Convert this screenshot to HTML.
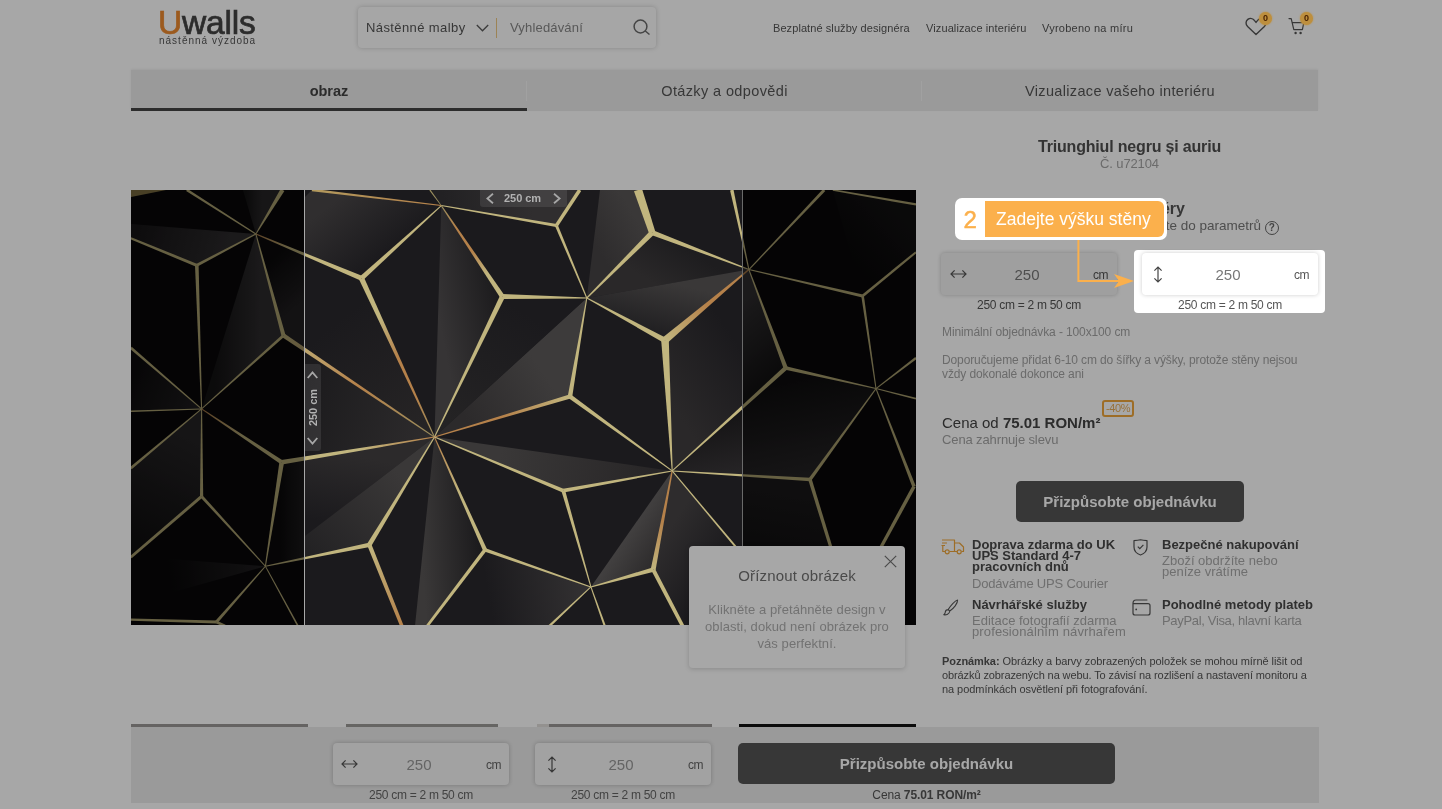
<!DOCTYPE html>
<html lang="cs">
<head>
<meta charset="utf-8">
<title>Uwalls - Triunghiul negru și auriu</title>
<style>
*{box-sizing:border-box;margin:0;padding:0}
html,body{width:1442px;height:809px;overflow:hidden;background:#fff}
body{font-family:"Liberation Sans",sans-serif;color:#444;position:relative}
.abs{position:absolute;white-space:nowrap;line-height:1}
#page{position:absolute;left:0;top:0;width:1442px;height:809px;overflow:hidden;background:#fff;will-change:transform}
#dim{position:absolute;left:0;top:0;width:1442px;height:809px;background:rgba(0,0,0,.345);z-index:50}
#over{position:absolute;left:0;top:0;width:1442px;height:809px;z-index:60;will-change:transform}
/* header */
.logo{left:158px;top:5.5px;font-size:33.5px;letter-spacing:-.2px;color:#444;height:34px;line-height:34px;-webkit-text-stroke:.7px}
.logo b{color:#ee8a2e;font-weight:400}
.tag{left:159px;top:36px;font-size:10px;letter-spacing:1px;color:#555}
.search{left:358px;top:7px;width:298px;height:41px;background:#fdfdfd;border-radius:4px;box-shadow:0 0 5px rgba(0,0,0,.2)}
.nav{font-size:11px;color:#555;top:23px}
.badge{width:13px;height:13px;border-radius:50%;background:#bd8f3e;color:#4a2200;font-size:9px;font-weight:700;text-align:center;line-height:13px;box-shadow:0 0 2px #bd8f3e}
/* tabs */
.tabs{left:131px;top:70px;width:1187px;height:41px;background:#ebebeb;box-shadow:0 -1px 2px rgba(0,0,0,.06)}
.tab{top:0;height:41px;line-height:43px;font-size:14.5px;text-align:center;color:#555}
/* panel */
.g{color:#a4a4a4;letter-spacing:-.12px}
.ctr{text-align:center}
.inp{width:176px;height:42px;border-radius:4px;background:#f3f3f3;box-shadow:0 0 4px rgba(0,0,0,.22)}
.inp .num{left:0;width:176px;text-align:center;top:14px;font-size:15px;color:#777;padding-right:4px}
.inp .cm{left:152px;top:16px;font-size:12px;color:#555;letter-spacing:-.6px}
.eq{font-size:12px;color:#555;text-align:center;width:176px;letter-spacing:-.28px}
.btn{background:#555;color:#fff;font-weight:700;font-size:15px;text-align:center;border-radius:5px}
.ft{font-size:13px;font-weight:700;color:#4a4a4a;line-height:11px}
.fs{font-size:13px;color:#aaa;line-height:11px}
.note{font-size:11px;line-height:14px;color:#555;letter-spacing:-.06px}
</style>
</head>
<body>
<div id="page">
  <!-- header -->
  <div class="abs logo"><b>U</b>walls</div>
  <div class="abs tag">nástěnná výzdoba</div>
  <div class="abs search">
    <span class="abs" style="left:8px;top:14px;font-size:13px;color:#555;letter-spacing:.4px">Nástěnné malby</span>
    <svg class="abs" style="left:118px;top:16.5px" width="13" height="8" viewBox="0 0 13 8"><path d="M.8 1 L6.5 6.8 L12.2 1" fill="none" stroke="#5a5a5a" stroke-width="1.3"/></svg>
    <div class="abs" style="left:138px;top:11px;width:1px;height:20px;background:#efc982"></div>
    <span class="abs" style="left:152px;top:14px;font-size:13px;color:#888;letter-spacing:.17px">Vyhledávání</span>
    <svg class="abs" style="left:274px;top:12.2px" width="19" height="17" viewBox="0 0 19 17"><circle cx="8.5" cy="7.5" r="6.4" fill="none" stroke="#6a6a6a" stroke-width="1.5"/><path d="M13.3 12 L17.5 15.5" stroke="#6a6a6a" stroke-width="1.5" fill="none"/></svg>
  </div>
  <span class="abs nav" style="left:773px;letter-spacing:.08px">Bezplatné služby designéra</span>
  <span class="abs nav" style="left:926px;letter-spacing:.11px">Vizualizace interiéru</span>
  <span class="abs nav" style="left:1042px;letter-spacing:.25px">Vyrobeno na míru</span>
  <svg class="abs" style="left:1245px;top:17px" width="22" height="19" viewBox="0 0 22 19"><path d="M11 17.5 L2.6 9.6 C0.4 7.4 0.6 4 2.8 2.4 C5 0.8 8 1.4 9.6 3.6 L11 5.4 L12.4 3.6 C14 1.4 17 0.8 19.2 2.4 C21.4 4 21.6 7.4 19.4 9.6 Z" fill="none" stroke="#555" stroke-width="1.4" stroke-linejoin="round"/></svg>
  <svg class="abs" style="left:1288px;top:17px" width="18" height="19" viewBox="0 0 18 19"><path d="M1 1.6 H3.2 L5.8 12.6 H14.4 L15.8 5.6 H4.2" fill="none" stroke="#555" stroke-width="1.2" stroke-linejoin="round" stroke-linecap="round"/><circle cx="7.6" cy="16" r="1.2" fill="#555"/><circle cx="12.6" cy="16" r="1.2" fill="#555"/></svg>

  <!-- tabs -->
  <div class="abs tabs">
    <div class="abs tab" style="left:0;width:396px;font-weight:700;color:#444;border-bottom:3px solid #444">obraz</div>
    <div class="abs tab" style="left:396px;width:395px;letter-spacing:.38px">Otázky a odpovědi</div>
    <div class="abs tab" style="left:791px;width:396px;letter-spacing:.35px">Vizualizace vašeho interiéru</div>
    <div class="abs" style="left:395px;top:11px;width:1px;height:20px;background:#f6f6f6"></div>
    <div class="abs" style="left:790px;top:11px;width:1px;height:20px;background:#f6f6f6"></div>
  </div>

  <!-- RIGHT PANEL -->
  <div class="abs ctr" style="left:941px;top:139px;width:377px;font-size:16px;font-weight:700;color:#505050;letter-spacing:-.18px">Triunghiul negru și auriu</div>
  <div class="abs ctr g" style="left:941px;top:157px;width:377px;font-size:13px">Č. u72104</div>
  <div class="abs" style="right:257px;top:201px;font-size:16px;font-weight:700;color:#555">Zadejte rozměry</div>
  <div class="abs" style="right:181px;top:218.5px;font-size:13.5px;color:#777">Nevíte, jak měřit? Přejděte do parametrů</div>
  <div class="abs ctr" style="left:1264.5px;top:220.5px;width:14.5px;height:14.5px;border:1.7px solid #666;border-radius:50%;font-size:10px;font-weight:700;line-height:11.2px;color:#666">?</div>

  <div class="abs inp" style="left:941px;top:253px">
    <svg class="abs" style="left:9px;top:16px" width="17" height="10" viewBox="0 0 17 10"><path d="M1 5 H16 M4.6 1.4 L1 5 L4.6 8.6 M12.4 1.4 L16 5 L12.4 8.6" fill="none" stroke="#555" stroke-width="1.2"/></svg>
    <span class="abs num">250</span><span class="abs cm">cm</span>
  </div>
  <div class="abs eq" style="left:941px;top:299px">250 cm = 2 m 50 cm</div>
  <div class="abs inp" style="left:1142px;top:253px">
    <svg class="abs" style="left:11px;top:13px" width="10" height="17" viewBox="0 0 10 17"><path d="M5 1 V16 M1.4 4.6 L5 1 L8.6 4.6 M1.4 12.4 L5 16 L8.6 12.4" fill="none" stroke="#555" stroke-width="1.2"/></svg>
    <span class="abs num">250</span><span class="abs cm">cm</span>
  </div>
  <div class="abs eq" style="left:1142px;top:299px">250 cm = 2 m 50 cm</div>

  <div class="abs g" style="left:942px;top:326px;font-size:12px">Minimální objednávka - 100x100 cm</div>
  <div class="abs g" style="left:942px;top:354px;font-size:12px;line-height:13.5px;white-space:normal;width:372px">Doporučujeme přidat 6-10 cm do šířky a výšky, protože stěny nejsou<br>vždy dokonalé dokonce ani</div>

  <div class="abs" style="left:942px;top:415px;font-size:15px;color:#444">Cena od <b>75.01 RON/m²</b></div>
  <div class="abs ctr" style="left:1102px;top:400px;width:32px;height:17px;border:2px solid #f0a73c;border-radius:3px;color:#e9ae5a;font-size:11px;line-height:13px;letter-spacing:-.4px">-40%</div>
  <div class="abs g" style="left:942px;top:432.5px;font-size:13px">Cena zahrnuje slevu</div>

  <div class="abs btn" style="left:1016px;top:481px;width:228px;height:41px;line-height:41px">Přizpůsobte objednávku</div>

  <!-- features -->
  <svg class="abs" style="left:941px;top:539px" width="24" height="16" viewBox="0 0 24 16"><g fill="none" stroke="#f0a73c" stroke-width="1.2" stroke-linejoin="round"><path d="M1 1 H13.5 V12.5 H8.5 M4 12.5 H1.8 V7"/><path d="M13.5 4 H18.5 L22.5 8 V12.5 H20.5 M16 12.5 H13.5"/><circle cx="6.2" cy="12.8" r="2"/><circle cx="18.2" cy="12.8" r="2"/><path d="M1 4 H6 M0.5 6.5 H4"/></g></svg>
  <div class="abs ft" style="left:972px;top:539.4px">Doprava zdarma do UK<br>UPS Standard 4-7<br>pracovních dnů</div>
  <div class="abs fs" style="left:972px;top:577.5px"><span style="letter-spacing:-.18px">Dodáváme UPS Courier</span></div>
  <svg class="abs" style="left:1133px;top:539px" width="15" height="17" viewBox="0 0 15 17"><path d="M1 1.6 C3.5 1.6 5.6 1.4 7.5 0.8 C9.4 1.4 11.5 1.6 14 1.6 V8 C14 12 11.5 14.6 7.5 16 C3.5 14.6 1 12 1 8 Z" fill="none" stroke="#555" stroke-width="1.2" stroke-linejoin="round"/><path d="M4.8 7.6 L6.8 9.6 L10.4 5.8" fill="none" stroke="#555" stroke-width="1.2"/></svg>
  <div class="abs ft" style="left:1162px;top:539.4px">Bezpečné nakupování</div>
  <div class="abs fs" style="left:1162px;top:554.5px">Zboží obdržíte nebo<br>peníze vrátíme</div>
  <svg class="abs" style="left:943px;top:599px" width="16" height="17" viewBox="0 0 16 17"><path d="M14.6 1 C12 1.6 7.4 6.6 5.2 10.6 L6.8 12 C10.6 9.4 14.8 4.4 14.6 1 Z M5.2 10.6 C3.2 10.6 2.4 12 2.2 13.4 C2 14.6 1.4 15.4 0.8 15.8 C3.2 16.2 6.4 15.2 6.8 12" fill="none" stroke="#555" stroke-width="1.1" stroke-linejoin="round"/></svg>
  <div class="abs ft" style="left:972px;top:599.3px">Návrhářské služby</div>
  <div class="abs fs" style="left:972px;top:614.5px">Editace fotografií zdarma<br><span style="letter-spacing:.12px">profesionálním návrhařem</span></div>
  <svg class="abs" style="left:1132px;top:599px" width="19" height="17" viewBox="0 0 19 17"><path d="M1 4.6 V14 Q1 16 3 16 H16 Q18 16 18 14 V6.6 Q18 4.6 16 4.6 H1 Q1 1 4 1 H15.4" fill="none" stroke="#555" stroke-width="1.2" stroke-linejoin="round"/><circle cx="4.2" cy="10.4" r=".9" fill="#555"/></svg>
  <div class="abs ft" style="left:1162px;top:599.3px">Pohodlné metody plateb</div>
  <div class="abs fs" style="left:1162px;top:614.5px"><span style="letter-spacing:-.33px">PayPal, Visa, hlavní karta</span></div>

  <div class="abs note" style="left:942px;top:654px"><b>Poznámka:</b> Obrázky a barvy zobrazených položek se mohou mírně lišit od<br><span style="letter-spacing:-.1px">obrázků zobrazených na webu. To závisí na rozlišení a nastavení monitoru a</span><br>na podmínkách osvětlení při fotografování.</div>

  <!-- thumbs -->
  <div class="abs" style="left:131px;top:724px;width:177px;height:40px;background:#9a9896"></div>
  <div class="abs" style="left:346px;top:724px;width:152px;height:40px;background:#9c9a98"></div>
  <div class="abs" style="left:537px;top:724px;width:12px;height:40px;background:#e0deda"></div>
  <div class="abs" style="left:549px;top:724px;width:163px;height:40px;background:#9a9896"></div>
  <div class="abs" style="left:739px;top:724px;width:177px;height:40px;background:#121112"></div>

  <!-- BOTTOM BAR -->
  <div class="abs" style="left:131px;top:727px;width:1188px;height:76px;background:#ebebeb"></div>
  <div class="abs inp" style="left:333px;top:743px;background:#f7f7f7">
    <svg class="abs" style="left:8px;top:16px" width="17" height="10" viewBox="0 0 17 10"><path d="M1 5 H16 M4.6 1.4 L1 5 L4.6 8.6 M12.4 1.4 L16 5 L12.4 8.6" fill="none" stroke="#555" stroke-width="1.2"/></svg>
    <span class="abs num" style="color:#999">250</span><span class="abs cm" style="left:153px;color:#666">cm</span>
  </div>
  <div class="abs eq" style="left:333px;top:789px;color:#666">250 cm = 2 m 50 cm</div>
  <div class="abs inp" style="left:535px;top:743px;background:#f7f7f7">
    <svg class="abs" style="left:12px;top:13px" width="10" height="17" viewBox="0 0 10 17"><path d="M5 1 V16 M1.4 4.6 L5 1 L8.6 4.6 M1.4 12.4 L5 16 L8.6 12.4" fill="none" stroke="#555" stroke-width="1.2"/></svg>
    <span class="abs num" style="color:#999">250</span><span class="abs cm" style="left:153px;color:#666">cm</span>
  </div>
  <div class="abs eq" style="left:535px;top:789px;color:#666">250 cm = 2 m 50 cm</div>
  <div class="abs btn" style="left:738px;top:743px;width:377px;height:41px;line-height:41px">Přizpůsobte objednávku</div>
  <div class="abs eq" style="left:738px;top:789px;width:377px;letter-spacing:-.1px">Cena <b>75.01 RON/m²</b></div>
</div>
<div id="dim"></div>
<div id="over">
  <div class="abs badge" style="left:1259px;top:12px">0</div>
  <div class="abs badge" style="left:1300px;top:12px">0</div>
  <!-- IMAGE -->
  <div class="abs" style="left:131px;top:190px;width:785px;height:435px;background:#0b0a0b;overflow:hidden">
<svg class="abs" style="left:0;top:0;filter:blur(.45px)" width="785" height="435" viewBox="0 0 785 435">
<defs><linearGradient id="l0" gradientUnits="userSpaceOnUse" x1="125" y1="44" x2="230" y2="88"><stop offset="0.00" stop-color="#b5814a"/><stop offset="0.33" stop-color="#c1b57e"/><stop offset="0.67" stop-color="#c1b57e"/><stop offset="1.00" stop-color="#c1b57e"/></linearGradient><linearGradient id="l1" gradientUnits="userSpaceOnUse" x1="152" y1="146" x2="304" y2="247"><stop offset="0.00" stop-color="#c1b57e"/><stop offset="0.50" stop-color="#b5814a"/><stop offset="1.00" stop-color="#9a8e5e"/></linearGradient><linearGradient id="l2" gradientUnits="userSpaceOnUse" x1="230" y1="88" x2="304" y2="247"><stop offset="0.00" stop-color="#c1b57e"/><stop offset="0.25" stop-color="#c1b57e"/><stop offset="0.50" stop-color="#b5814a"/><stop offset="0.75" stop-color="#b5814a"/><stop offset="1.00" stop-color="#9a8e5e"/></linearGradient><linearGradient id="l3" gradientUnits="userSpaceOnUse" x1="310" y1="16" x2="181" y2="0"><stop offset="0.00" stop-color="#b5814a"/><stop offset="1.00" stop-color="#b39a5e"/></linearGradient><linearGradient id="l4" gradientUnits="userSpaceOnUse" x1="310" y1="16" x2="371" y2="107"><stop offset="0.00" stop-color="#9a8e5e"/><stop offset="0.25" stop-color="#b5814a"/><stop offset="0.50" stop-color="#b5814a"/><stop offset="0.75" stop-color="#c1b57e"/><stop offset="1.00" stop-color="#c1b57e"/></linearGradient><linearGradient id="l5" gradientUnits="userSpaceOnUse" x1="534" y1="150" x2="618" y2="80"><stop offset="0.00" stop-color="#c1b57e"/><stop offset="0.50" stop-color="#b5814a"/><stop offset="1.00" stop-color="#b5814a"/></linearGradient><linearGradient id="l6" gradientUnits="userSpaceOnUse" x1="439" y1="206" x2="304" y2="247"><stop offset="0.00" stop-color="#c1b57e"/><stop offset="0.50" stop-color="#b5814a"/><stop offset="1.00" stop-color="#b5814a"/></linearGradient><linearGradient id="l7" gradientUnits="userSpaceOnUse" x1="71" y1="219" x2="151" y2="272"><stop offset="0.00" stop-color="#b5814a"/><stop offset="0.50" stop-color="#c1b57e"/><stop offset="1.00" stop-color="#c1b57e"/></linearGradient><linearGradient id="l8" gradientUnits="userSpaceOnUse" x1="151" y1="272" x2="304" y2="247"><stop offset="0.00" stop-color="#c1b57e"/><stop offset="0.50" stop-color="#c1b57e"/><stop offset="1.00" stop-color="#b5814a"/></linearGradient><linearGradient id="l9" gradientUnits="userSpaceOnUse" x1="304" y1="247" x2="354" y2="360"><stop offset="0.00" stop-color="#b5814a"/><stop offset="0.50" stop-color="#c1b57e"/><stop offset="1.00" stop-color="#c1b57e"/></linearGradient><linearGradient id="l10" gradientUnits="userSpaceOnUse" x1="238" y1="355" x2="271" y2="436"><stop offset="0.00" stop-color="#c1b57e"/><stop offset="1.00" stop-color="#b5814a"/></linearGradient><linearGradient id="l11" gradientUnits="userSpaceOnUse" x1="541" y1="281" x2="522" y2="380"><stop offset="0.00" stop-color="#b5814a"/><stop offset="0.50" stop-color="#b5814a"/><stop offset="1.00" stop-color="#c1b57e"/></linearGradient></defs>
<defs><linearGradient id="g0" gradientUnits="userSpaceOnUse" x1="199" y1="15" x2="244" y2="72"><stop offset="0" stop-color="#302e2f"/><stop offset="1" stop-color="#1b1a1d"/></linearGradient><linearGradient id="g1" gradientUnits="userSpaceOnUse" x1="314" y1="20" x2="399" y2="5"><stop offset="0" stop-color="#222123"/><stop offset="1" stop-color="#302e2f"/></linearGradient><linearGradient id="g2" gradientUnits="userSpaceOnUse" x1="310" y1="140" x2="372" y2="128"><stop offset="0" stop-color="#363435"/><stop offset="1" stop-color="#1c1b1d"/></linearGradient><linearGradient id="g3" gradientUnits="userSpaceOnUse" x1="467" y1="60" x2="509" y2="35"><stop offset="0" stop-color="#2e2c2d"/><stop offset="1" stop-color="#3a3838"/></linearGradient><linearGradient id="g4" gradientUnits="userSpaceOnUse" x1="509" y1="85" x2="534" y2="45"><stop offset="0" stop-color="#2a2829"/><stop offset="1" stop-color="#1e1d1f"/></linearGradient><linearGradient id="g5" gradientUnits="userSpaceOnUse" x1="549" y1="95" x2="537" y2="145"><stop offset="0" stop-color="#3a3838"/><stop offset="1" stop-color="#212022"/></linearGradient><linearGradient id="g6" gradientUnits="userSpaceOnUse" x1="414" y1="185" x2="339" y2="235"><stop offset="0" stop-color="#3d3b3b"/><stop offset="1" stop-color="#2c2a2b"/></linearGradient><linearGradient id="g7" gradientUnits="userSpaceOnUse" x1="173" y1="210" x2="304" y2="247"><stop offset="0" stop-color="#1c1b1d"/><stop offset="1" stop-color="#2e2c2d"/></linearGradient><linearGradient id="g8" gradientUnits="userSpaceOnUse" x1="291" y1="370" x2="349" y2="366"><stop offset="0" stop-color="#3a3838"/><stop offset="1" stop-color="#1c1b1d"/></linearGradient><linearGradient id="g9" gradientUnits="userSpaceOnUse" x1="369" y1="265" x2="519" y2="295"><stop offset="0" stop-color="#3a3838"/><stop offset="1" stop-color="#282627"/></linearGradient><linearGradient id="g10" gradientUnits="userSpaceOnUse" x1="497" y1="343" x2="537" y2="370"><stop offset="0" stop-color="#424040"/><stop offset="1" stop-color="#282627"/></linearGradient><linearGradient id="g11" gradientUnits="userSpaceOnUse" x1="531" y1="350" x2="584" y2="385"><stop offset="0" stop-color="#2e2c2d"/><stop offset="1" stop-color="#1b1a1d"/></linearGradient><linearGradient id="g12" gradientUnits="userSpaceOnUse" x1="537" y1="210" x2="611" y2="160"><stop offset="0" stop-color="#2a2829"/><stop offset="1" stop-color="#1b1a1d"/></linearGradient><linearGradient id="g13" gradientUnits="userSpaceOnUse" x1="209" y1="130" x2="294" y2="235"><stop offset="0" stop-color="#1b1a1d"/><stop offset="1" stop-color="#262425"/></linearGradient><linearGradient id="g14" gradientUnits="userSpaceOnUse" x1="389" y1="120" x2="319" y2="230"><stop offset="0" stop-color="#1b1a1d"/><stop offset="1" stop-color="#242324"/></linearGradient><linearGradient id="g15" gradientUnits="userSpaceOnUse" x1="199" y1="260" x2="184" y2="330"><stop offset="0" stop-color="#2c2a2b"/><stop offset="1" stop-color="#1b1a1d"/></linearGradient><linearGradient id="g16" gradientUnits="userSpaceOnUse" x1="460" y1="397" x2="359" y2="415"><stop offset="0" stop-color="#343233"/><stop offset="1" stop-color="#1b1a1d"/></linearGradient><linearGradient id="g17" gradientUnits="userSpaceOnUse" x1="264" y1="280" x2="169" y2="375"><stop offset="0" stop-color="#3a3838"/><stop offset="1" stop-color="#201f21"/></linearGradient><linearGradient id="g18" gradientUnits="userSpaceOnUse" x1="99" y1="60" x2="9" y2="35"><stop offset="0" stop-color="#343234"/><stop offset="1" stop-color="#1a181a"/></linearGradient><linearGradient id="g19" gradientUnits="userSpaceOnUse" x1="131" y1="140" x2="84" y2="140"><stop offset="0" stop-color="#343234"/><stop offset="1" stop-color="#161516"/></linearGradient><linearGradient id="g20" gradientUnits="userSpaceOnUse" x1="131" y1="10" x2="115" y2="10"><stop offset="0" stop-color="#2c2a2c"/><stop offset="1" stop-color="#161516"/></linearGradient><linearGradient id="g21" gradientUnits="userSpaceOnUse" x1="139" y1="70" x2="173" y2="110"><stop offset="0" stop-color="#0c0b0c"/><stop offset="1" stop-color="#242224"/></linearGradient><linearGradient id="g22" gradientUnits="userSpaceOnUse" x1="59" y1="250" x2="9" y2="350"><stop offset="0" stop-color="#2a282a"/><stop offset="1" stop-color="#121112"/></linearGradient><linearGradient id="g23" gradientUnits="userSpaceOnUse" x1="71" y1="219" x2="0" y2="190"><stop offset="0" stop-color="#242224"/><stop offset="1" stop-color="#0e0d0e"/></linearGradient><linearGradient id="g24" gradientUnits="userSpaceOnUse" x1="134" y1="376" x2="39" y2="390"><stop offset="0" stop-color="#242224"/><stop offset="1" stop-color="#0a090a"/></linearGradient><linearGradient id="g25" gradientUnits="userSpaceOnUse" x1="149" y1="310" x2="173" y2="310"><stop offset="0" stop-color="#0c0b0c"/><stop offset="1" stop-color="#1e1c1e"/></linearGradient><linearGradient id="g26" gradientUnits="userSpaceOnUse" x1="0" y1="0" x2="35" y2="0"><stop offset="0" stop-color="#8a7a48"/><stop offset="1" stop-color="#8a7a48"/></linearGradient><linearGradient id="g27" gradientUnits="userSpaceOnUse" x1="611" y1="110" x2="659" y2="170"><stop offset="0" stop-color="#343234"/><stop offset="1" stop-color="#161516"/></linearGradient><linearGradient id="g28" gradientUnits="userSpaceOnUse" x1="669" y1="190" x2="689" y2="280"><stop offset="0" stop-color="#100f10"/><stop offset="1" stop-color="#2a282a"/></linearGradient><linearGradient id="g29" gradientUnits="userSpaceOnUse" x1="719" y1="70" x2="769" y2="25"><stop offset="0" stop-color="#0a090a"/><stop offset="1" stop-color="#141314"/></linearGradient><linearGradient id="g30" gradientUnits="userSpaceOnUse" x1="659" y1="300" x2="639" y2="410"><stop offset="0" stop-color="#1e1c1e"/><stop offset="1" stop-color="#0c0b0c"/></linearGradient></defs>
<rect width="785" height="435" fill="#1b1a1d"/>
<g><polygon points="173.0,8.0 181.0,0.0 310.3,15.6 230.5,88.3 173.0,64.0" fill="url(#g0)"/><polygon points="310.3,15.6 298.9,0.0 448.7,0.0 425.4,35.5" fill="url(#g1)"/><polygon points="310.3,15.6 303.5,247.1 371.4,106.6" fill="url(#g2)"/><polygon points="469.0,0.0 507.0,0.0 521.2,42.6 455.8,108.0" fill="url(#g3)"/><polygon points="455.8,108.0 521.2,42.6 617.9,79.6" fill="url(#g4)"/><polygon points="455.8,108.0 617.9,79.6 534.0,150.3" fill="url(#g5)"/><polygon points="455.8,108.0 303.5,247.1 439.0,206.5" fill="url(#g6)"/><polygon points="152.5,145.5 303.5,247.1 150.7,272.3 173.0,265.0 173.0,160.0" fill="url(#g7)"/><polygon points="303.5,247.1 354.0,359.9 296.2,436.0 284.0,436.0" fill="url(#g8)"/><polygon points="303.5,247.1 541.2,280.9 432.3,300.7" fill="url(#g9)"/><polygon points="541.2,280.9 459.9,396.9 522.2,379.6" fill="url(#g10)"/><polygon points="541.2,280.9 522.2,379.6 551.6,436.0 611.0,436.0 611.0,364.0" fill="url(#g11)"/><polygon points="617.9,79.6 534.0,150.3 541.2,280.9 611.0,218.0 611.0,77.0" fill="url(#g12)"/><polygon points="230.5,88.3 303.5,247.1 152.5,145.5" fill="url(#g13)"/><polygon points="371.4,106.6 455.8,108.0 303.5,247.1" fill="url(#g14)"/><polygon points="150.7,272.3 303.5,247.1 134.4,376.2 173.0,367.0 173.0,269.0" fill="url(#g15)"/><polygon points="459.9,396.9 354.0,359.9 296.2,436.0 418.4,436.0" fill="url(#g16)"/><polygon points="303.5,247.1 238.3,354.8 134.4,376.2" fill="url(#g17)"/></g>
<rect x="0" y="0" width="173" height="435" fill="#000" opacity=".62"/><rect x="612" y="0" width="173" height="435" fill="#000" opacity=".62"/>
<g><polygon points="124.9,44.0 65.8,75.3 -0.2,48.3 0.0,34.0" fill="url(#g18)"/><polygon points="124.9,44.0 70.6,218.9 152.5,145.5" fill="url(#g19)"/><polygon points="124.9,44.0 151.5,0.0 112.0,0.0" fill="url(#g20)"/><polygon points="124.9,44.0 152.5,145.5 173.0,159.0 173.0,64.0" fill="url(#g21)"/><polygon points="70.6,218.9 -0.2,278.2 -0.2,367.3 70.6,306.4" fill="url(#g22)"/><polygon points="70.6,218.9 -0.2,157.8 -0.2,221.3" fill="url(#g23)"/><polygon points="134.4,376.2 0.0,366.0 0.0,414.0" fill="url(#g24)"/><polygon points="150.7,272.3 134.4,376.2 173.0,367.0 173.0,269.0" fill="url(#g25)"/><polygon points="0.0,0.0 35.0,0.0 0.0,7.0" fill="url(#g26)"/><polygon points="611.0,77.0 617.9,79.6 654.7,178.0 611.0,218.0" fill="url(#g27)"/><polygon points="654.7,178.0 745.0,198.6 679.0,289.5 541.2,280.9" fill="url(#g28)"/><polygon points="701.8,0.0 785.0,14.4 785.0,62.2 731.6,106.0" fill="url(#g29)"/><polygon points="679.0,289.5 611.0,285.0 611.0,436.0 724.0,436.0" fill="url(#g30)"/></g>
<g>
<polygon points="125.2,43.5 56.5,-1.1 55.1,1.1 124.6,44.5" fill="#c1b57e"/>
<polygon points="125.3,44.3 153.4,1.1 149.6,-1.1 124.5,43.7" fill="#c1b57e"/>
<polygon points="124.6,43.5 65.1,74.0 66.5,76.6 125.2,44.5" fill="#c1b57e"/>
<polygon points="124.7,44.5 229.5,90.6 231.5,86.0 125.1,43.5" fill="url(#l0)"/>
<polygon points="124.4,44.1 150.5,146.0 154.5,145.0 125.4,43.9" fill="#c1b57e"/>
<polygon points="66.4,73.9 0.2,47.3 -0.6,49.3 65.2,76.7" fill="#c1b57e"/>
<polygon points="64.0,75.4 70.1,218.9 71.1,218.9 67.6,75.2" fill="#c1b57e"/>
<polygon points="151.5,144.4 70.3,218.5 70.9,219.3 153.5,146.6" fill="#c1b57e"/>
<polygon points="151.3,147.3 303.2,247.5 303.8,246.7 153.7,143.7" fill="url(#l1)"/>
<polygon points="232.2,90.1 310.6,16.0 310.0,15.2 228.8,86.5" fill="#c1b57e"/>
<polygon points="228.1,89.4 303.0,247.3 304.0,246.9 232.9,87.2" fill="url(#l2)"/>
<polygon points="310.4,15.1 181.2,-1.3 180.8,1.3 310.2,16.1" fill="url(#l3)"/>
<polygon points="310.6,15.4 299.4,-0.4 298.4,0.4 310.0,15.8" fill="#9a8e5e"/>
<polygon points="310.2,16.1 425.1,37.0 425.7,34.0 310.4,15.1" fill="#c1b57e"/>
<polygon points="309.9,15.9 369.4,108.0 373.4,105.2 310.7,15.3" fill="url(#l4)"/>
<polygon points="371.4,109.1 455.8,108.5 455.8,107.5 371.4,104.1" fill="#c1b57e"/>
<polygon points="369.1,105.5 303.0,246.9 304.0,247.3 373.7,107.7" fill="#c1b57e"/>
<polygon points="426.8,36.4 450.2,1.0 447.2,-1.0 424.0,34.6" fill="#c1b57e"/>
<polygon points="424.0,36.1 455.3,108.2 456.3,107.8 426.8,34.9" fill="#c1b57e"/>
<polygon points="456.2,108.4 523.1,44.5 519.3,40.7 455.4,107.6" fill="#c1b57e"/>
<polygon points="455.6,108.4 532.7,152.7 535.3,147.9 456.0,107.6" fill="#c1b57e"/>
<polygon points="455.3,107.9 436.8,206.1 441.2,206.9 456.3,108.1" fill="#c1b57e"/>
<polygon points="524.3,41.6 511.0,-1.3 503.0,1.3 518.1,43.6" fill="#c1b57e"/>
<polygon points="520.3,44.9 617.7,80.1 618.1,79.1 522.1,40.3" fill="#c1b57e"/>
<polygon points="536.3,153.0 618.3,80.1 617.5,79.1 531.7,147.6" fill="url(#l5)"/>
<polygon points="530.2,150.5 540.7,280.9 541.7,280.9 537.8,150.1" fill="#c1b57e"/>
<polygon points="618.4,79.5 602.5,-0.4 599.1,0.4 617.4,79.7" fill="#c1b57e"/>
<polygon points="618.3,79.9 694.3,1.0 692.1,-1.0 617.5,79.3" fill="#c1b57e"/>
<polygon points="617.8,80.1 731.3,107.5 731.9,104.5 618.0,79.1" fill="#c1b57e"/>
<polygon points="617.4,79.8 652.7,178.8 656.7,177.2 618.4,79.4" fill="#c1b57e"/>
<polygon points="732.5,107.0 785.7,63.0 784.3,61.4 730.7,105.0" fill="#c1b57e"/>
<polygon points="730.3,106.2 744.5,198.7 745.5,198.5 732.9,105.8" fill="#c1b57e"/>
<polygon points="653.2,176.4 540.9,280.5 541.5,281.3 656.2,179.6" fill="#c1b57e"/>
<polygon points="654.3,179.7 744.9,199.1 745.1,198.1 655.1,176.3" fill="#c1b57e"/>
<polygon points="745.3,199.0 785.7,168.9 784.3,167.1 744.7,198.2" fill="#c1b57e"/>
<polygon points="744.9,199.1 784.8,209.4 785.2,207.8 745.1,198.1" fill="#c1b57e"/>
<polygon points="744.6,198.3 677.6,288.5 680.4,290.5 745.4,198.9" fill="#c1b57e"/>
<polygon points="744.5,198.8 781.3,297.1 784.7,295.9 745.5,198.4" fill="#c1b57e"/>
<polygon points="701.7,0.8 784.8,15.6 785.2,13.2 701.9,-0.8" fill="#c1b57e"/>
<polygon points="438.4,204.5 303.4,246.6 303.6,247.6 439.6,208.5" fill="url(#l6)"/>
<polygon points="437.7,208.3 540.9,281.3 541.5,280.5 440.3,204.7" fill="#c1b57e"/>
<polygon points="70.9,218.5 0.7,156.8 -1.1,158.8 70.3,219.3" fill="#c1b57e"/>
<polygon points="70.6,218.4 -0.2,220.5 -0.2,222.1 70.6,219.4" fill="#c1b57e"/>
<polygon points="70.3,218.5 -1.1,277.2 0.7,279.2 70.9,219.3" fill="#c1b57e"/>
<polygon points="70.1,218.9 69.0,306.4 72.2,306.4 71.1,218.9" fill="#c1b57e"/>
<polygon points="70.3,219.3 149.5,274.1 151.9,270.5 70.9,218.5" fill="url(#l7)"/>
<polygon points="69.6,305.3 -1.1,366.3 0.7,368.3 71.6,307.5" fill="#c1b57e"/>
<polygon points="69.5,307.4 134.0,376.5 134.8,375.9 71.7,305.4" fill="#c1b57e"/>
<polygon points="151.1,274.6 303.6,247.6 303.4,246.6 150.3,270.0" fill="url(#l8)"/>
<polygon points="148.4,271.9 133.9,376.1 134.9,376.3 153.0,272.7" fill="#c1b57e"/>
<polygon points="134.5,376.7 238.7,356.9 237.9,352.7 134.3,375.7" fill="#c1b57e"/>
<polygon points="134.0,375.9 84.2,430.9 86.6,433.1 134.8,376.5" fill="#c1b57e"/>
<polygon points="134.0,376.4 166.3,436.4 167.7,435.6 134.8,376.0" fill="#c1b57e"/>
<polygon points="85.4,430.5 -0.2,428.4 -0.2,430.8 85.4,433.5" fill="#c1b57e"/>
<polygon points="84.8,433.2 93.4,437.2 94.6,434.8 86.0,430.8" fill="#c1b57e"/>
<polygon points="303.1,246.8 236.3,353.6 240.3,356.0 303.9,247.4" fill="#c1b57e"/>
<polygon points="303.0,247.3 352.1,360.7 355.9,359.1 304.0,246.9" fill="url(#l9)"/>
<polygon points="303.3,247.6 431.6,302.5 433.0,298.9 303.7,246.6" fill="#c1b57e"/>
<polygon points="236.3,355.6 269.3,436.7 272.5,435.3 240.3,354.0" fill="url(#l10)"/>
<polygon points="353.4,361.6 459.7,397.4 460.1,396.4 354.6,358.2" fill="#c1b57e"/>
<polygon points="352.6,358.8 295.1,435.2 297.3,436.8 355.4,361.0" fill="#c1b57e"/>
<polygon points="541.2,281.4 678.9,291.3 679.1,287.7 541.2,280.4" fill="#c1b57e"/>
<polygon points="541.1,280.4 432.0,298.8 432.6,302.6 541.3,281.4" fill="#c1b57e"/>
<polygon points="540.6,280.8 519.8,379.1 524.6,380.1 541.8,281.0" fill="url(#l11)"/>
<polygon points="540.8,281.2 669.9,437.0 672.1,435.0 541.6,280.6" fill="#c1b57e"/>
<polygon points="430.5,301.2 459.4,397.0 460.4,396.8 434.1,300.2" fill="#c1b57e"/>
<polygon points="521.6,377.5 459.8,396.4 460.0,397.4 522.8,381.7" fill="#c1b57e"/>
<polygon points="520.4,380.5 550.0,436.8 553.2,435.2 524.0,378.7" fill="#c1b57e"/>
<polygon points="459.6,396.5 417.6,435.1 419.2,436.9 460.2,397.3" fill="#c1b57e"/>
<polygon points="459.4,397.1 472.8,436.4 474.8,435.6 460.4,396.7" fill="#c1b57e"/>
<polygon points="677.3,290.0 722.6,436.4 725.4,435.6 680.7,289.0" fill="#c1b57e"/>
<polygon points="781.4,295.7 705.7,435.3 708.3,436.7 784.6,297.3" fill="#c1b57e"/>
</g>
</svg>
    <div class="abs" style="left:0;top:0;width:173px;height:435px;background:rgba(0,0,0,.47)"></div>
    <div class="abs" style="left:612px;top:0;width:173px;height:435px;background:rgba(0,0,0,.47)"></div>
    <div class="abs" style="left:173px;top:0;width:1px;height:435px;background:#a9a9a9"></div>
    <div class="abs" style="left:611px;top:0;width:1px;height:435px;background:#6a6a6a"></div>
    <!-- width label -->
    <div class="abs" style="left:349px;top:0;width:87px;height:17px;background:rgba(255,255,255,.09);border-radius:0 0 3px 3px">
      <svg class="abs" style="left:6px;top:3px" width="8" height="11" viewBox="0 0 8 11"><path d="M7 .7 L1.4 5.5 L7 10.3" fill="none" stroke="#a6a6a6" stroke-width="1.8"/></svg>
      <span class="abs" style="left:24px;top:3px;font-size:11px;font-weight:700;color:#b2b2b2;letter-spacing:-.05px">250 cm</span>
      <svg class="abs" style="left:73px;top:3px" width="8" height="11" viewBox="0 0 8 11"><path d="M1 .7 L6.6 5.5 L1 10.3" fill="none" stroke="#a6a6a6" stroke-width="1.8"/></svg>
    </div>
    <!-- height label -->
    <div class="abs" style="left:174px;top:174px;width:16px;height:87px;background:rgba(255,255,255,.09);border-radius:0 3px 3px 0">
      <svg class="abs" style="left:2px;top:7px" width="11" height="8" viewBox="0 0 11 8"><path d="M.7 7 L5.5 1.4 L10.3 7" fill="none" stroke="#a6a6a6" stroke-width="1.8"/></svg>
      <span class="abs" style="left:-12px;top:38px;width:40px;text-align:center;font-size:11px;font-weight:700;color:#b2b2b2;letter-spacing:-.05px;transform:rotate(-90deg)">250 cm</span>
      <svg class="abs" style="left:2px;top:73px" width="11" height="8" viewBox="0 0 11 8"><path d="M.7 1 L5.5 6.6 L10.3 1" fill="none" stroke="#a6a6a6" stroke-width="1.8"/></svg>
    </div>
  </div>
  <!-- popup -->
  <div class="abs" style="left:689px;top:546px;width:216px;height:122px;background:#a7a7a7;border-radius:4px;box-shadow:0 1px 5px rgba(0,0,0,.18)">
    <svg class="abs" style="left:195px;top:9px" width="13" height="13" viewBox="0 0 13 13"><path d="M.8 .8 L12.2 12.2 M12.2 .8 L.8 12.2" stroke="#4a4a4a" stroke-width="1.2"/></svg>
    <div class="abs ctr" style="left:0;top:22px;width:216px;font-size:15px;color:#4a4a4a;letter-spacing:.16px">Oříznout obrázek</div>
    <div class="abs ctr" style="left:0;top:56px;width:216px;font-size:13px;line-height:16.9px;color:#727272;white-space:normal;letter-spacing:.08px">Klikněte a přetáhněte design v<br>oblasti, dokud není obrázek pro<br>vás perfektní.</div>
  </div>
  <!-- tour highlight -->
  <div class="abs" style="left:1134px;top:250px;width:191px;height:63px;background:#fff;border-radius:4px"></div>
  <div class="abs inp" style="left:1142px;top:253px;background:#fff;box-shadow:0 0 4px rgba(0,0,0,.2)">
    <svg class="abs" style="left:11px;top:13px" width="10" height="17" viewBox="0 0 10 17"><path d="M5 1 V16 M1.4 4.6 L5 1 L8.6 4.6 M1.4 12.4 L5 16 L8.6 12.4" fill="none" stroke="#444" stroke-width="1.2"/></svg>
    <span class="abs num">250</span><span class="abs cm">cm</span>
  </div>
  <div class="abs eq" style="left:1142px;top:299px">250 cm = 2 m 50 cm</div>
  <!-- tooltip -->
  <div class="abs" style="left:955px;top:198px;width:212px;height:42px;background:#fff;border-radius:7px">
    <span class="abs" style="left:8.5px;top:9.5px;font-size:24px;color:#fbb04c;-webkit-text-stroke:.5px #fbb04c">2</span>
    <div class="abs" style="left:30px;top:3px;width:179px;height:36px;background:#fbb04c;border-radius:0 6px 6px 0;color:#fff;font-size:17.5px;line-height:36px;padding-left:11px">Zadejte výšku stěny</div>
  </div>
  <svg class="abs" style="left:1070px;top:240px" width="70" height="52" viewBox="0 0 70 52"><path d="M8.4 0 V41 H58" fill="none" stroke="#fbb04c" stroke-width="2"/><path d="M44 34 L64 41 L44 48 L49 41 Z" fill="#fbb04c"/></svg>
</div>
</body>
</html>
